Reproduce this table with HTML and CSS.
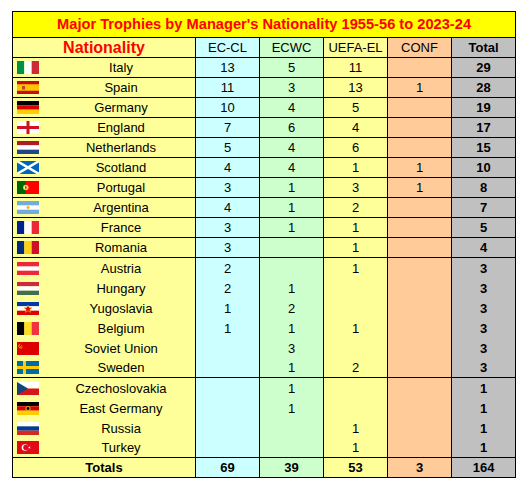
FILE: index.html
```html
<!DOCTYPE html>
<html>
<head>
<meta charset="utf-8">
<link rel="stylesheet" href="styles.css">
</head>
<body>
<table class="tbl">
  <colgroup>
    <col class="c-nat"><col class="c-num"><col class="c-num"><col class="c-num"><col class="c-num"><col class="c-num">
  </colgroup>
  <tr class="title-row"><td colspan="6" class="title">Major Trophies by Manager's Nationality 1955-56 to 2023-24</td></tr>
  <tr class="head">
    <td class="nat nat-head">Nationality</td>
    <td class="ecl">EC-CL</td>
    <td class="ecwc">ECWC</td>
    <td class="uefa">UEFA-EL</td>
    <td class="conf">CONF</td>
    <td class="tot">Total</td>
  </tr>

  <tr class="line"><td class="nat"><div class="natc"><svg class="flag" viewBox="0 0 22 13"><rect width="7.33" height="13" fill="#009246"/><rect x="7.33" width="7.34" height="13" fill="#fff"/><rect x="14.67" width="7.33" height="13" fill="#ce2b37"/></svg><span class="name">Italy</span></div></td><td class="ecl">13</td><td class="ecwc">5</td><td class="uefa">11</td><td class="conf"></td><td class="tot">29</td></tr>

  <tr class="line"><td class="nat"><div class="natc"><svg class="flag" viewBox="0 0 22 13"><rect width="22" height="13" fill="#c60b1e"/><rect y="3.25" width="22" height="6.5" fill="#ffc400"/><rect x="5" y="5" width="3" height="3.5" fill="#ad1519" opacity="0.7"/></svg><span class="name">Spain</span></div></td><td class="ecl">11</td><td class="ecwc">3</td><td class="uefa">13</td><td class="conf">1</td><td class="tot">28</td></tr>

  <tr class="line"><td class="nat"><div class="natc"><svg class="flag" viewBox="0 0 22 13"><rect width="22" height="4.33" fill="#000"/><rect y="4.33" width="22" height="4.34" fill="#dd0000"/><rect y="8.67" width="22" height="4.33" fill="#ffce00"/></svg><span class="name">Germany</span></div></td><td class="ecl">10</td><td class="ecwc">4</td><td class="uefa">5</td><td class="conf"></td><td class="tot">19</td></tr>

  <tr class="line"><td class="nat"><div class="natc"><svg class="flag" viewBox="0 0 22 13"><rect width="22" height="13" fill="#fff"/><rect x="9.5" width="3" height="13" fill="#ce1124"/><rect y="5" width="22" height="3" fill="#ce1124"/></svg><span class="name">England</span></div></td><td class="ecl">7</td><td class="ecwc">6</td><td class="uefa">4</td><td class="conf"></td><td class="tot">17</td></tr>

  <tr class="line"><td class="nat"><div class="natc"><svg class="flag" viewBox="0 0 22 13"><rect width="22" height="4.33" fill="#ae1c28"/><rect y="4.33" width="22" height="4.34" fill="#fff"/><rect y="8.67" width="22" height="4.33" fill="#21468b"/></svg><span class="name">Netherlands</span></div></td><td class="ecl">5</td><td class="ecwc">4</td><td class="uefa">6</td><td class="conf"></td><td class="tot">15</td></tr>

  <tr class="line"><td class="nat"><div class="natc"><svg class="flag" viewBox="0 0 22 13"><rect width="22" height="13" fill="#0065bd"/><path d="M0 0L22 13M22 0L0 13" stroke="#fff" stroke-width="2.4"/></svg><span class="name">Scotland</span></div></td><td class="ecl">4</td><td class="ecwc">4</td><td class="uefa">1</td><td class="conf">1</td><td class="tot">10</td></tr>

  <tr class="line"><td class="nat"><div class="natc"><svg class="flag" viewBox="0 0 22 13"><rect width="22" height="13" fill="#ff0000"/><rect width="8.8" height="13" fill="#006600"/><circle cx="8.8" cy="6.5" r="2.8" fill="#ffcc00"/><circle cx="8.8" cy="6.5" r="1.6" fill="#fff"/><rect x="8" y="5.4" width="1.6" height="2.2" fill="#d00"/></svg><span class="name">Portugal</span></div></td><td class="ecl">3</td><td class="ecwc">1</td><td class="uefa">3</td><td class="conf">1</td><td class="tot">8</td></tr>

  <tr class="line"><td class="nat"><div class="natc"><svg class="flag" viewBox="0 0 22 13"><rect width="22" height="13" fill="#74acdf"/><rect y="4.33" width="22" height="4.34" fill="#fff"/><circle cx="11" cy="6.5" r="1.4" fill="#f6b40e"/></svg><span class="name">Argentina</span></div></td><td class="ecl">4</td><td class="ecwc">1</td><td class="uefa">2</td><td class="conf"></td><td class="tot">7</td></tr>

  <tr class="line"><td class="nat"><div class="natc"><svg class="flag" viewBox="0 0 22 13"><rect width="7.33" height="13" fill="#002395"/><rect x="7.33" width="7.34" height="13" fill="#fff"/><rect x="14.67" width="7.33" height="13" fill="#ed2939"/></svg><span class="name">France</span></div></td><td class="ecl">3</td><td class="ecwc">1</td><td class="uefa">1</td><td class="conf"></td><td class="tot">5</td></tr>

  <tr class="line"><td class="nat"><div class="natc"><svg class="flag" viewBox="0 0 22 13"><rect width="7.33" height="13" fill="#002b7f"/><rect x="7.33" width="7.34" height="13" fill="#fcd116"/><rect x="14.67" width="7.33" height="13" fill="#ce1126"/></svg><span class="name">Romania</span></div></td><td class="ecl">3</td><td class="ecwc"></td><td class="uefa">1</td><td class="conf"></td><td class="tot">4</td></tr>

  <tr><td class="nat"><div class="natc"><svg class="flag" viewBox="0 0 22 13"><rect width="22" height="13" fill="#ed2939"/><rect y="4.33" width="22" height="4.34" fill="#fff"/></svg><span class="name">Austria</span></div></td><td class="ecl">2</td><td class="ecwc"></td><td class="uefa">1</td><td class="conf"></td><td class="tot">3</td></tr>

  <tr><td class="nat"><div class="natc"><svg class="flag" viewBox="0 0 22 13"><rect width="22" height="4.33" fill="#cd2a3e"/><rect y="4.33" width="22" height="4.34" fill="#fff"/><rect y="8.67" width="22" height="4.33" fill="#436f4d"/></svg><span class="name">Hungary</span></div></td><td class="ecl">2</td><td class="ecwc">1</td><td class="uefa"></td><td class="conf"></td><td class="tot">3</td></tr>

  <tr><td class="nat"><div class="natc"><svg class="flag" viewBox="0 0 22 13"><rect width="22" height="4.33" fill="#0038a8"/><rect y="4.33" width="22" height="4.34" fill="#fff"/><rect y="8.67" width="22" height="4.33" fill="#de0000"/><polygon points="11,3 12.2,5.6 15,5.8 12.8,7.6 13.6,10.3 11,8.8 8.4,10.3 9.2,7.6 7,5.8 9.8,5.6" fill="#de0000" stroke="#fcd116" stroke-width="0.5"/></svg><span class="name">Yugoslavia</span></div></td><td class="ecl">1</td><td class="ecwc">2</td><td class="uefa"></td><td class="conf"></td><td class="tot">3</td></tr>

  <tr><td class="nat"><div class="natc"><svg class="flag" viewBox="0 0 22 13"><rect width="7.33" height="13" fill="#000"/><rect x="7.33" width="7.34" height="13" fill="#fdda24"/><rect x="14.67" width="7.33" height="13" fill="#ef3340"/></svg><span class="name">Belgium</span></div></td><td class="ecl">1</td><td class="ecwc">1</td><td class="uefa">1</td><td class="conf"></td><td class="tot">3</td></tr>

  <tr><td class="nat"><div class="natc"><svg class="flag" viewBox="0 0 22 13"><rect width="22" height="13" fill="#dd0000"/><path d="M3.2 2.2a2 2 0 1 0 2.4 2.6" stroke="#ffd700" stroke-width="0.7" fill="none"/><path d="M3 5.4L5 3.2" stroke="#ffd700" stroke-width="0.7"/></svg><span class="name">Soviet Union</span></div></td><td class="ecl"></td><td class="ecwc">3</td><td class="uefa"></td><td class="conf"></td><td class="tot">3</td></tr>

  <tr class="line"><td class="nat"><div class="natc"><svg class="flag" viewBox="0 0 22 13"><rect width="22" height="13" fill="#006aa7"/><rect x="6" width="3" height="13" fill="#fecc00"/><rect y="5" width="22" height="3" fill="#fecc00"/></svg><span class="name">Sweden</span></div></td><td class="ecl"></td><td class="ecwc">1</td><td class="uefa">2</td><td class="conf"></td><td class="tot">3</td></tr>

  <tr><td class="nat"><div class="natc"><svg class="flag" viewBox="0 0 22 13"><rect width="22" height="6.5" fill="#fff"/><rect y="6.5" width="22" height="6.5" fill="#d7141a"/><polygon points="0,0 11,6.5 0,13" fill="#11457e"/></svg><span class="name">Czechoslovakia</span></div></td><td class="ecl"></td><td class="ecwc">1</td><td class="uefa"></td><td class="conf"></td><td class="tot">1</td></tr>

  <tr><td class="nat"><div class="natc"><svg class="flag" viewBox="0 0 22 13"><rect width="22" height="4.33" fill="#000"/><rect y="4.33" width="22" height="4.34" fill="#dd0000"/><rect y="8.67" width="22" height="4.33" fill="#ffce00"/><circle cx="11" cy="6.5" r="2.6" fill="#d4a017"/><circle cx="11" cy="6.5" r="1.4" fill="#000"/></svg><span class="name">East Germany</span></div></td><td class="ecl"></td><td class="ecwc">1</td><td class="uefa"></td><td class="conf"></td><td class="tot">1</td></tr>

  <tr><td class="nat"><div class="natc"><svg class="flag" viewBox="0 0 22 13"><rect width="22" height="4.33" fill="#fff"/><rect y="4.33" width="22" height="4.34" fill="#0039a6"/><rect y="8.67" width="22" height="4.33" fill="#d52b1e"/></svg><span class="name">Russia</span></div></td><td class="ecl"></td><td class="ecwc"></td><td class="uefa">1</td><td class="conf"></td><td class="tot">1</td></tr>

  <tr class="line"><td class="nat"><div class="natc"><svg class="flag" viewBox="0 0 22 13"><rect width="22" height="13" fill="#e30a17"/><circle cx="8" cy="6.5" r="3.3" fill="#fff"/><circle cx="8.9" cy="6.5" r="2.65" fill="#e30a17"/><polygon points="11,6.5 13.6,5.6 12,7.8 12,5.2 13.6,7.4" fill="#fff"/></svg><span class="name">Turkey</span></div></td><td class="ecl"></td><td class="ecwc"></td><td class="uefa">1</td><td class="conf"></td><td class="tot">1</td></tr>

  <tr class="totals"><td class="nat">Totals</td><td class="ecl">69</td><td class="ecwc">39</td><td class="uefa">53</td><td class="conf">3</td><td class="tot">164</td></tr>
</table>
</body>
</html>
```

FILE: styles.css
```css
html, body {
  margin: 0;
  padding: 0;
  background: #fff;
}
body {
  padding: 11px 0 0 12px;
  font-family: "Liberation Sans", Arial, sans-serif;
  font-size: 13px;
  color: #000;
}
.tbl {
  border-collapse: collapse;
  table-layout: fixed;
  width: 504px;
  border: 1px solid #000;
}
.c-nat { width: 183px; }
.c-num { width: 64px; }
.tbl td {
  padding: 0;
  height: 20px;
  text-align: center;
  vertical-align: middle;
  border-left: 1px solid #000;
  border-right: 1px solid #000;
  line-height: 19px;
  white-space: nowrap;
}
.title-row td {
  height: 25px;
  background: #ffff00;
  color: #ff0000;
  font-weight: bold;
  font-size: 14.67px;
  border-bottom: 1px solid #000;
}
.head td {
  height: 19px;
  border-bottom: 1px solid #000;
}
.line td {
  height: 19px;
  border-bottom: 1px solid #000;
}
.totals td {
  height: 19px;
  font-weight: bold;
  border-top: 1px solid #000;
}
.nat { background: #ffff99; }
.nat-head {
  color: #ff0000;
  font-weight: bold;
  font-size: 16px;
}
.ecl { background: #ccffff; }
.ecwc { background: #ccffcc; }
.uefa { background: #ffff99; }
.conf { background: #ffcc99; }
.tot { background: #c0c0c0; font-weight: bold; }
.natc {
  display: flex;
  align-items: center;
  height: 19px;
}
.flag {
  width: 22px;
  height: 13px;
  margin-left: 4px;
  flex: none;
}
.name {
  flex: 1;
  text-align: center;
  padding-left: 8px;
}
```
